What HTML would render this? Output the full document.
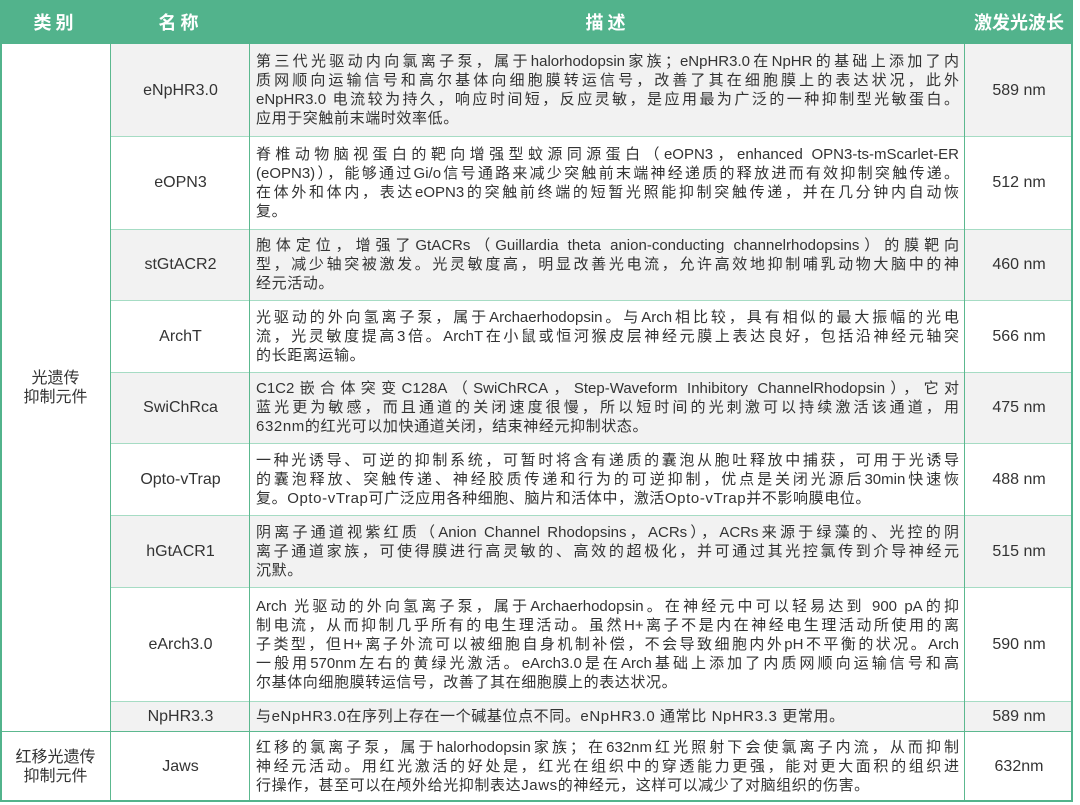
<!DOCTYPE html>
<html><head><meta charset="utf-8"><style>
body{margin:0;background:#fff;width:1080px;height:805px;overflow:hidden;font-family:"Liberation Sans","Noto Sans CJK SC",sans-serif;color:#333;}
.c{position:absolute;box-sizing:border-box;}
.h{background:#52b38c;color:#fff;font-weight:bold;font-size:18px;display:flex;align-items:center;justify-content:center;letter-spacing:4px;}
.cell{display:flex;align-items:center;justify-content:center;font-size:16px;text-align:center;line-height:19px;}
.d{font-size:15px;line-height:19px;padding:0 6px;display:flex;flex-direction:column;justify-content:center;letter-spacing:0.6px;}
.d div{white-space:nowrap;overflow:hidden;}
.d div.j{text-align:justify;text-align-last:justify;white-space:normal;height:19px;letter-spacing:0;}
.g{background:#f2f2f2;}
.hl{position:absolute;height:1px;background:#a6dcc4;}
.vl{position:absolute;width:1px;background:#5cb88f;}
</style></head><body>
<div class="c h" style="left:0;top:0;width:111px;height:44px">类别</div>
<div class="c h" style="left:111px;top:0;width:139px;height:44px">名称</div>
<div class="c h" style="left:250px;top:0;width:715px;height:44px">描述</div>
<div class="c h" style="left:965px;top:0;width:108px;height:44px;letter-spacing:0">激发光波长</div>

<div class="c cell" style="left:0;top:44px;width:111px;height:687px">光遗传<br>抑制元件</div>
<div class="c cell" style="left:0;top:731px;width:111px;height:71px">红移光遗传<br>抑制元件</div>

<div class="c cell g" style="left:111px;top:44px;width:139px;height:92px">eNpHR3.0</div>
<div class="c d g" style="left:250px;top:44px;width:715px;height:92px">
<div class="j">第三代光驱动内向氯离子泵，属于halorhodopsin家族；eNpHR3.0在NpHR的基础上添加了内</div>
<div class="j">质网顺向运输信号和高尔基体向细胞膜转运信号，改善了其在细胞膜上的表达状况，此外</div>
<div class="j">eNpHR3.0 电流较为持久，响应时间短，反应灵敏，是应用最为广泛的一种抑制型光敏蛋白。</div>
<div>应用于突触前末端时效率低。</div></div>
<div class="c cell g" style="left:965px;top:44px;width:108px;height:92px">589 nm</div>

<div class="c cell" style="left:111px;top:136px;width:139px;height:93px">eOPN3</div>
<div class="c d" style="left:250px;top:136px;width:715px;height:93px">
<div class="j">脊椎动物脑视蛋白的靶向增强型蚊源同源蛋白（eOPN3，enhanced OPN3-ts-mScarlet-ER</div>
<div class="j">(eOPN3)），能够通过Gi/o信号通路来减少突触前末端神经递质的释放进而有效抑制突触传递。</div>
<div class="j">在体外和体内，表达eOPN3的突触前终端的短暂光照能抑制突触传递，并在几分钟内自动恢</div>
<div>复。</div></div>
<div class="c cell" style="left:965px;top:136px;width:108px;height:93px">512 nm</div>

<div class="c cell g" style="left:111px;top:229px;width:139px;height:71px">stGtACR2</div>
<div class="c d g" style="left:250px;top:229px;width:715px;height:71px">
<div class="j">胞体定位，增强了GtACRs（Guillardia theta anion-conducting channelrhodopsins）的膜靶向</div>
<div class="j">型，减少轴突被激发。光灵敏度高，明显改善光电流，允许高效地抑制哺乳动物大脑中的神</div>
<div>经元活动。</div></div>
<div class="c cell g" style="left:965px;top:229px;width:108px;height:71px">460 nm</div>

<div class="c cell" style="left:111px;top:300px;width:139px;height:72px">ArchT</div>
<div class="c d" style="left:250px;top:300px;width:715px;height:72px">
<div class="j">光驱动的外向氢离子泵，属于Archaerhodopsin。与Arch相比较，具有相似的最大振幅的光电</div>
<div class="j">流，光灵敏度提高3倍。ArchT在小鼠或恒河猴皮层神经元膜上表达良好，包括沿神经元轴突</div>
<div>的长距离运输。</div></div>
<div class="c cell" style="left:965px;top:300px;width:108px;height:72px">566 nm</div>

<div class="c cell g" style="left:111px;top:372px;width:139px;height:71px">SwiChRca</div>
<div class="c d g" style="left:250px;top:372px;width:715px;height:71px">
<div class="j">C1C2嵌合体突变C128A（SwiChRCA，Step-Waveform Inhibitory ChannelRhodopsin），它对</div>
<div class="j">蓝光更为敏感，而且通道的关闭速度很慢，所以短时间的光刺激可以持续激活该通道，用</div>
<div>632nm的红光可以加快通道关闭，结束神经元抑制状态。</div></div>
<div class="c cell g" style="left:965px;top:372px;width:108px;height:71px">475 nm</div>

<div class="c cell" style="left:111px;top:443px;width:139px;height:72px">Opto-vTrap</div>
<div class="c d" style="left:250px;top:443px;width:715px;height:72px">
<div class="j">一种光诱导、可逆的抑制系统，可暂时将含有递质的囊泡从胞吐释放中捕获，可用于光诱导</div>
<div class="j">的囊泡释放、突触传递、神经胶质传递和行为的可逆抑制，优点是关闭光源后30min快速恢</div>
<div>复。Opto-vTrap可广泛应用各种细胞、脑片和活体中，激活Opto-vTrap并不影响膜电位。</div></div>
<div class="c cell" style="left:965px;top:443px;width:108px;height:72px">488 nm</div>

<div class="c cell g" style="left:111px;top:515px;width:139px;height:72px">hGtACR1</div>
<div class="c d g" style="left:250px;top:515px;width:715px;height:72px">
<div class="j">阴离子通道视紫红质（Anion Channel Rhodopsins，ACRs），ACRs来源于绿藻的、光控的阴</div>
<div class="j">离子通道家族，可使得膜进行高灵敏的、高效的超极化，并可通过其光控氯传到介导神经元</div>
<div>沉默。</div></div>
<div class="c cell g" style="left:965px;top:515px;width:108px;height:72px">515 nm</div>

<div class="c cell" style="left:111px;top:587px;width:139px;height:114px">eArch3.0</div>
<div class="c d" style="left:250px;top:587px;width:715px;height:114px">
<div class="j">Arch 光驱动的外向氢离子泵，属于Archaerhodopsin。在神经元中可以轻易达到 900 pA的抑</div>
<div class="j">制电流，从而抑制几乎所有的电生理活动。虽然H+离子不是内在神经电生理活动所使用的离</div>
<div class="j">子类型，但H+离子外流可以被细胞自身机制补偿，不会导致细胞内外pH不平衡的状况。Arch</div>
<div class="j">一般用570nm左右的黄绿光激活。eArch3.0是在Arch基础上添加了内质网顺向运输信号和高</div>
<div>尔基体向细胞膜转运信号，改善了其在细胞膜上的表达状况。</div></div>
<div class="c cell" style="left:965px;top:587px;width:108px;height:114px">590 nm</div>

<div class="c cell g" style="left:111px;top:701px;width:139px;height:30px">NpHR3.3</div>
<div class="c d g" style="left:250px;top:701px;width:715px;height:30px">
<div>与eNpHR3.0在序列上存在一个碱基位点不同。eNpHR3.0 通常比 NpHR3.3 更常用。</div></div>
<div class="c cell g" style="left:965px;top:701px;width:108px;height:30px">589 nm</div>

<div class="c cell" style="left:111px;top:731px;width:139px;height:71px">Jaws</div>
<div class="c d" style="left:250px;top:731px;width:715px;height:71px">
<div class="j">红移的氯离子泵，属于halorhodopsin家族；在632nm红光照射下会使氯离子内流，从而抑制</div>
<div class="j">神经元活动。用红光激活的好处是，红光在组织中的穿透能力更强，能对更大面积的组织进</div>
<div>行操作，甚至可以在颅外给光抑制表达Jaws的神经元，这样可以减少了对脑组织的伤害。</div></div>
<div class="c cell" style="left:965px;top:731px;width:108px;height:71px">632nm</div>

<div class="hl" style="left:111px;width:962px;top:136px"></div>
<div class="hl" style="left:111px;width:962px;top:229px"></div>
<div class="hl" style="left:111px;width:962px;top:300px"></div>
<div class="hl" style="left:111px;width:962px;top:372px"></div>
<div class="hl" style="left:111px;width:962px;top:443px"></div>
<div class="hl" style="left:111px;width:962px;top:515px"></div>
<div class="hl" style="left:111px;width:962px;top:587px"></div>
<div class="hl" style="left:111px;width:962px;top:701px"></div>
<div class="hl" style="left:0;width:1073px;top:731px;background:#5cb88f"></div>
<div class="vl" style="left:110px;top:44px;height:758px"></div>
<div class="vl" style="left:249px;top:44px;height:758px"></div>
<div class="vl" style="left:964px;top:44px;height:758px"></div>
<div class="c" style="left:0;top:0;width:1073px;height:802px;border:2px solid #52b38c;border-top:none"></div>
</body></html>
